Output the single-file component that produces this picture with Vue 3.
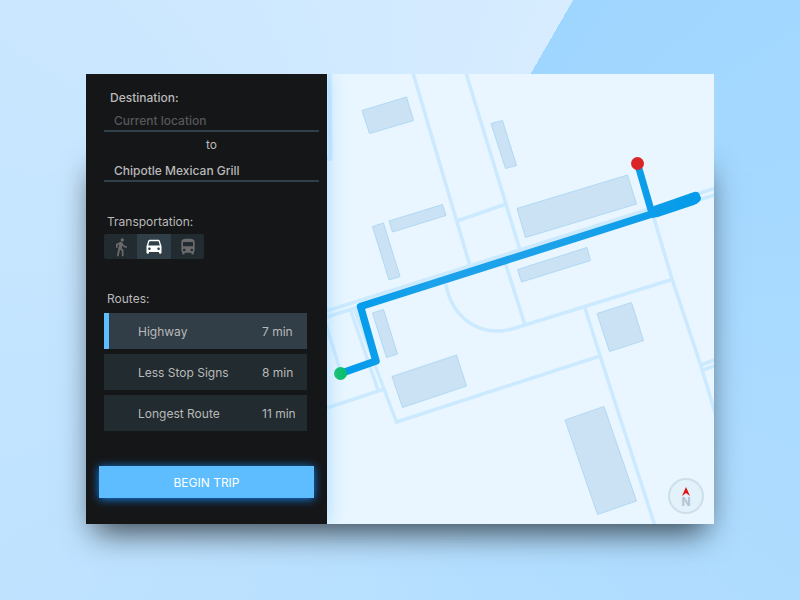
<script setup>
import { ref } from 'vue'

const origin = ref('')
const destination = ref('Chipotle Mexican Grill')
const mode = ref('car')
const route = ref('Highway')

const modes = [
  {
    id: 'walk',
    label: 'Walk',
    path: 'M13.5 5.5c1.1 0 2-.9 2-2s-.9-2-2-2-2 .9-2 2 .9 2 2 2zM9.8 8.9L7 23h2.1l1.8-8 2.1 2v6h2v-7.500l-2.100-2 .6-3C14.800 12 16.800 13 19 13v-2c-1.900 0-3.500-1-4.300-2.400l-1-1.600c-.4-.6-1-1-1.700-1-.3 0-.5.1-.8.1L6 8.300V13h2V9.600l1.800-.7'
  },
  {
    id: 'car',
    label: 'Drive',
    path: 'M18.92 4.500C18.72 3.800 18.16 3.300 17.5 3.300h-11c-.66 0-1.21.5-1.42 1.200L3 11v8c0 .55.45 1 1 1h1c.55 0 1-.45 1-1v-1h12v1c0 .55.45 1 1 1h1c.55 0 1-.45 1-1v-8l-2.080-6.500zM6.5 15.500c-.83 0-1.5-.67-1.5-1.5s.67-1.500 1.500-1.500 1.500.67 1.500 1.500-.67 1.500-1.500 1.500zm11 0c-.83 0-1.5-.67-1.5-1.5s.67-1.5 1.5-1.5 1.500.67 1.500 1.500-.67 1.500-1.500 1.500zM5 10.200l1.500-5.200h11L19 10.200H5z'
  },
  {
    id: 'bus',
    label: 'Bus',
    path: 'M4 16c0 .88.39 1.670 1 2.220V20c0 .55.45 1 1 1h1c.55 0 1-.45 1-1v-1h8v1c0 .55.45 1 1 1h1c.55 0 1-.45 1-1v-1.780c.61-.55 1-1.340 1-2.220V6c0-3.500-3.580-4-8-4s-8 .5-8 4v10zm3.500 1c-.83 0-1.500-.67-1.500-1.500S6.670 14 7.500 14s1.500.67 1.500 1.500S8.330 17 7.500 17zm9 0c-.83 0-1.500-.67-1.500-1.500s.67-1.500 1.500-1.500 1.500.67 1.500 1.500-.67 1.500-1.500 1.500zm1.500-6H6V6h12v5z'
  }
]

const routes = [
  { name: 'Highway', time: '7 min' },
  { name: 'Less Stop Signs', time: '8 min' },
  { name: 'Longest Route', time: '11 min' }
]

const roads = [
  'M413 73L470 266', 'M466 73L520 250', 'M457 221L506 204',
  'M325 311.500L716 188', 'M325 317.500L716 194.500',
  'M446 284C451 315 477 338 512 329L672 279.500', 'M505 262L525 325',
  'M653 215L672 279L701 366L716 416', 'M585 308L602 362L655 526',
  'M350.500 310L378 390', 'M354.500 309L375 365L396.500 422L600 356',
  'M325 321L340 370', 'M325 408.500L383 389.500',
  'M701 365L716 359.500', 'M703 370L716 365.500'
]

const buildings = [
  '362,110.5 406.5,97 413.5,120.5 369.5,133.5',
  '491,123.5 502.5,120.5 516.5,165.5 505.5,168.5',
  '389,221 442.5,204.5 446,215.5 392.5,232',
  '372.5,226.5 383.5,223 400,276.5 389,280',
  '372.5,313 383.5,309.5 397.5,354 386.5,357.5',
  '392,376.5 456.5,355 466.5,386 402.5,407.5',
  '517,208.5 627.5,175 636.5,204 525.5,237.5',
  '517.5,269.5 587,247.5 590.5,260.5 521.5,282',
  '597,313.5 631.5,302.5 643.5,340.5 609.5,351.5',
  '565,420 604,406.5 636.5,501 597.5,514.5'
]
</script>

<template>
  <main class="page">
    <div class="frame">
      <div class="card">
        <form class="sidebar" @submit.prevent>
          <section class="destination">
            <label class="heading strong" for="origin">Destination:</label>
            <input id="origin" v-model="origin" class="field" type="text" placeholder="Current location">
            <label class="to" for="target">to</label>
            <input id="target" v-model="destination" class="field" type="text">
          </section>

          <section class="transport">
            <h2 class="heading">Transportation:</h2>
            <div class="modes">
              <button
                v-for="m in modes"
                :key="m.id"
                type="button"
                class="mode"
                :class="{ active: mode === m.id }"
                :aria-label="m.label"
                :aria-pressed="mode === m.id"
                @click="mode = m.id"
              >
                <svg class="icon" viewBox="0 0 24 24" aria-hidden="true"><path :d="m.path" /></svg>
              </button>
            </div>
          </section>

          <section class="routes">
            <h2 class="heading">Routes:</h2>
            <div class="list">
              <button
                v-for="r in routes"
                :key="r.name"
                type="button"
                class="route"
                :class="{ active: route === r.name }"
                :aria-pressed="route === r.name"
                @click="route = r.name"
              >
                <span>{{ r.name }}</span>
                <span>{{ r.time }}</span>
              </button>
            </div>
          </section>

          <button class="begin" type="submit">BEGIN TRIP</button>
        </form>

        <div class="map">
          <svg class="canvas" viewBox="327 74 387 450" preserveAspectRatio="xMidYMid slice" aria-hidden="true">
            <defs>
              <linearGradient id="trail" gradientUnits="userSpaceOnUse" x1="340" y1="0" x2="700" y2="0">
                <stop offset="0" stop-color="#009bec" />
                <stop offset="0.25" stop-color="#1ba2ea" />
                <stop offset="0.6" stop-color="#1ba2ea" />
                <stop offset="1" stop-color="#049bea" />
              </linearGradient>
            </defs>
            <path v-for="d in roads" :key="d" class="road" :d="d" />
            <path class="road edge" d="M329.500 73L330.500 159L326 158" />
            <polygon v-for="b in buildings" :key="b" class="building" :points="b" />
            <path class="trail" d="M340.500 373.500L376 361L360.500 306.500L655 213" />
            <path class="trail branch" d="M637.500 163.500L651 210" />
            <path
              fill="url(#trail)"
              d="M650 211L654 206L694 192Q698 191 699.500 194L701 198Q701 202 694 205L658 217L652 218Z"
            />
            <circle cx="637.5" cy="163.500" r="6.500" fill="#da2526" />
            <circle cx="340.500" cy="373.500" r="6.500" fill="#0bbf6a" />
          </svg>
          <div class="compass">
            <svg class="needle" viewBox="0 0 8 9" aria-hidden="true"><path d="M4 0L8 9L4 6L0 9Z" /></svg>
            <span>N</span>
          </div>
        </div>
      </div>
    </div>
  </main>
</template>

<style>
body {
  margin: 0;
}
</style>

<style scoped>
.page {
  box-sizing: border-box;
  display: grid;
  min-height: 100vh;
  padding: 74px 86px 76px;
  background: conic-gradient(from 30deg at 50% 50%, #9fd6ff, #d7ecff);
  font-family: Inter, "Liberation Sans", sans-serif;
  font-size: 12px;
  line-height: 16px;
  color: #b9b9b9;
}

.frame {
  position: relative;
  z-index: 0;
  display: grid;
}

.frame::before {
  content: "";
  position: absolute;
  z-index: -1;
  inset: 90px 8px 0;
  box-shadow: 0 8px 30px rgba(0, 0, 0, 0.7);
}

.card {
  display: grid;
  grid-template-columns: 241px 1fr;
  overflow: hidden;
}

.sidebar {
  position: relative;
  z-index: 1;
  display: flex;
  flex-direction: column;
  box-sizing: border-box;
  padding: 16px 8px 26px 18px;
  background: #151618;
  box-shadow: 0 0 18px rgba(140, 205, 255, 0.7);
}

.heading {
  margin: 0 3px;
  font-size: 12px;
  font-weight: 400;
  line-height: 16px;
}

.destination {
  display: flex;
  flex-direction: column;
}

.strong {
  margin: 0 6px 6px;
  font-weight: 500;
}

.field {
  box-sizing: border-box;
  width: 100%;
  height: 20px;
  padding: 0 10px 2px;
  border: 0;
  border-bottom: 2px solid #30404a;
  border-radius: 0;
  outline: 0;
  background: transparent;
  font: inherit;
  font-weight: 500;
  color: #b9b9b9;
}

.field::placeholder {
  color: #57585a;
  opacity: 1;
}

.to {
  margin: 5px 0 9px;
  text-align: center;
}

.transport {
  margin-top: 32px;
}

.modes {
  display: inline-flex;
  margin-top: 4px;
  overflow: hidden;
  border-radius: 2px;
  vertical-align: top;
  background: #222b2f;
}

.mode {
  display: flex;
  align-items: center;
  justify-content: center;
  width: 33px;
  height: 25px;
  padding: 0;
  border: 0;
  background: transparent;
  color: #6b6b6d;
}

.mode.active {
  width: 34px;
  background: #303e48;
  color: #fff;
}

.icon {
  width: 20px;
  height: 20px;
  fill: currentColor;
}

.routes {
  margin-top: 32px;
}

.list {
  display: flex;
  flex-direction: column;
  gap: 5px;
  margin: 6px 12px 0 0;
}

.route {
  display: grid;
  grid-template-columns: 1fr 45px;
  align-items: center;
  height: 36px;
  padding: 2px 0 0 29px;
  border: 0;
  border-left: 5px solid #222b2f;
  background: #222b2f;
  font: inherit;
  text-align: left;
  color: #b9b9b9;
}

.route.active {
  border-left-color: #5dbeff;
  background: #313d47;
}

.begin {
  height: 32px;
  margin: auto 5px 0 -5px;
  padding: 2px 0 0;
  border: 0;
  background: #5dbdff;
  box-shadow: 0 1px 10px #1386f0;
  font: inherit;
  color: #fff;
}

.map {
  position: relative;
  background: #e9f6ff;
}

.canvas {
  position: absolute;
  width: 100%;
  height: 100%;
}

.road {
  fill: none;
  stroke: #cceaff;
  stroke-width: 3.5;
}

.edge {
  stroke-width: 4;
  stroke-linejoin: round;
}

.building {
  fill: #cbe2f5;
  stroke: #b0d9f3;
}

.trail {
  fill: none;
  stroke: url(#trail);
  stroke-width: 7.5;
  stroke-linejoin: round;
}

.branch {
  stroke-width: 7;
  stroke-linecap: round;
}

.compass {
  position: absolute;
  right: 10px;
  bottom: 10px;
  display: flex;
  flex-direction: column;
  align-items: center;
  box-sizing: border-box;
  width: 36px;
  height: 36px;
  padding-top: 7px;
  border: 2px solid #cddfec;
  border-radius: 50%;
  background: #e2f1fa;
  font-size: 12px;
  font-weight: 700;
  line-height: 12px;
  color: #b0c4d3;
}

.needle {
  width: 8px;
  height: 9px;
  fill: #e01212;
}
</style>
